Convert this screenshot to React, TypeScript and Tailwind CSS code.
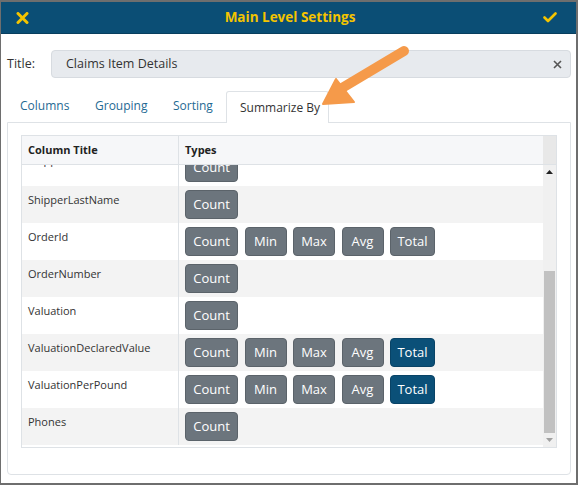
import React from 'react';

type Row = { name: string; types: string[]; active?: string[] };

const rows: Row[] = [
  { name: 'ShipperFirstName', types: ['Count'] },
  { name: 'ShipperLastName', types: ['Count'] },
  { name: 'OrderId', types: ['Count', 'Min', 'Max', 'Avg', 'Total'] },
  { name: 'OrderNumber', types: ['Count'] },
  { name: 'Valuation', types: ['Count'] },
  { name: 'ValuationDeclaredValue', types: ['Count', 'Min', 'Max', 'Avg', 'Total'], active: ['Total'] },
  { name: 'ValuationPerPound', types: ['Count', 'Min', 'Max', 'Avg', 'Total'], active: ['Total'] },
  { name: 'Phones', types: ['Count'] },
];

const widths: Record<string, string> = {
  Count: 'w-[53px]',
  Min: 'w-[42px]',
  Max: 'w-[42px]',
  Avg: 'w-[42px]',
  Total: 'w-[45px]',
};

function TypeButton({ label, active }: { label: string; active: boolean }) {
  return (
    <button
      className={`h-[29px] ${widths[label]} rounded-[4px] border text-[13px] text-white leading-none ${
        active ? 'bg-[#0b5078] border-[#094366]' : 'bg-[#6c757d] border-[#5b636a]'
      }`}
    >
      {label}
    </button>
  );
}

export default function App() {
  return (
    <div
      className="relative w-[578px] h-[485px] bg-white border-2 border-l border-[#6e6e6e] overflow-hidden text-[#333]"
      style={{ fontFamily: '"Open Sans", "Noto Sans", sans-serif' }}
    >
      {/* Header */}
      <div className="h-[32px] bg-[#0b4e75] border-b border-[#083e5e] flex items-center justify-between px-[14px]">
        <svg width="13" height="12" viewBox="0 0 13 12" className="ml-[1px]">
          <path d="M2 1.5 L11 10.5 M11 1.5 L2 10.5" stroke="#f4c400" strokeWidth="3" strokeLinecap="round" />
        </svg>
        <span className="text-[13.5px] font-bold text-[#f4c400] ml-[8px]">Main Level Settings</span>
        <svg width="14" height="11" viewBox="0 0 14 11" className="mr-[5px]">
          <path d="M1.5 5.5 L5 9 L12.5 1.5" stroke="#f4c400" strokeWidth="2.6" fill="none" strokeLinecap="round" strokeLinejoin="round" />
        </svg>
      </div>

      {/* Title */}
      <div className="flex items-center mt-[16px] pl-[6px] pr-[5px]">
        <span className="text-[12.5px] w-[44px]">Title:</span>
        <div className="flex-1 h-[28px] bg-[#e7eaee] border border-[#d7dbe0] rounded-[4px] flex items-center justify-between pl-[14px] pr-[8px]">
          <span className="text-[12.5px]">Claims Item Details</span>
          <svg width="9" height="9" viewBox="0 0 9 9">
            <path d="M1 1 L8 8 M8 1 L1 8" stroke="#555" strokeWidth="1.6" />
          </svg>
        </div>
      </div>

      {/* Tabs */}
      <div className="mx-[6px] mt-[12px] flex items-end h-[32px] text-[12px]">
        <div className="w-[75px] h-full flex items-center pl-[13px] text-[#1f6a93]">Columns</div>
        <div className="w-[78px] h-full flex items-center pl-[13px] text-[#1f6a93]">Grouping</div>
        <div className="w-[66px] h-full flex items-center pl-[13px] text-[#1f6a93]">Sorting</div>
        <div className="w-[103px] h-full flex items-center pl-[13px] text-[#333] border border-b-0 border-[#dee2e6] rounded-t-[3px] bg-white relative top-[1px]">
          Summarize By
        </div>
        <div className="flex-1" />
      </div>

      {/* Panel */}
      <div className="mx-[6px] mr-[5px] h-[353px] border border-[#dee2e6] rounded-b-[4px] px-[13px] pt-[12px]">
        <div className="border border-[#dee2e6] h-[313px] flex flex-col">
          {/* header row */}
          <div className="flex h-[29px] bg-[#f6f7f9] border-b border-[#dee2e6] text-[11px] font-bold text-[#222]">
            <div className="w-[157px] border-r border-[#dee2e6] flex items-center pl-[6px]">Column Title</div>
            <div className="flex-1 flex items-center pl-[6px]">Types</div>
            <div className="w-[13px] bg-[#e8e8e8]" />
          </div>
          <div className="flex flex-1 overflow-hidden">
            <div className="flex-1 overflow-hidden">
              <div className="-mt-[16px]">
                {rows.map((r, i) => (
                  <div key={r.name} className={`flex h-[37px] ${i % 2 === 1 ? 'bg-[#f3f3f3]' : 'bg-white'}`}>
                    <div
                      className={`w-[157px] border-r border-[#dee2e6] pl-[6px] text-[11px] text-[#333] ${
                        i === 0 ? 'pt-[3px]' : 'pt-[6px]'
                      }`}
                    >
                      {r.name}
                    </div>
                    <div className="flex-1 flex items-start gap-[6.5px] pl-[6px] pt-[4px]">
                      {r.types.map((t) => (
                        <TypeButton key={t} label={t} active={!!r.active?.includes(t)} />
                      ))}
                    </div>
                  </div>
                ))}
              </div>
            </div>
            {/* scrollbar */}
            <div className="w-[13px] bg-[#f0f0f0] flex flex-col items-center">
              <div className="h-[14px] flex items-center justify-center">
                <svg width="7" height="4" viewBox="0 0 7 4">
                  <path d="M0 4 L3.5 0 L7 4 Z" fill="#222" />
                </svg>
              </div>
              <div className="h-[92px]" />
              <div className="w-[11px] h-[162px] bg-[#c1c1c1]" />
              <div className="flex-1 flex items-center justify-center">
                <svg width="7" height="4" viewBox="0 0 7 4">
                  <path d="M0 0 L3.5 4 L7 0 Z" fill="#a0a0a0" />
                </svg>
              </div>
            </div>
          </div>
        </div>
      </div>

      {/* Orange pointer arrow */}
      <svg className="absolute left-0 top-0 pointer-events-none" width="578" height="485">
        <path d="M403 49 L341 86" stroke="#f59a4a" strokeWidth="10" strokeLinecap="round" />
        <path d="M322 102 L335 77 L353 100 Z" fill="#f59a4a" stroke="#f59a4a" strokeWidth="2" strokeLinejoin="round" />
      </svg>
    </div>
  );
}
